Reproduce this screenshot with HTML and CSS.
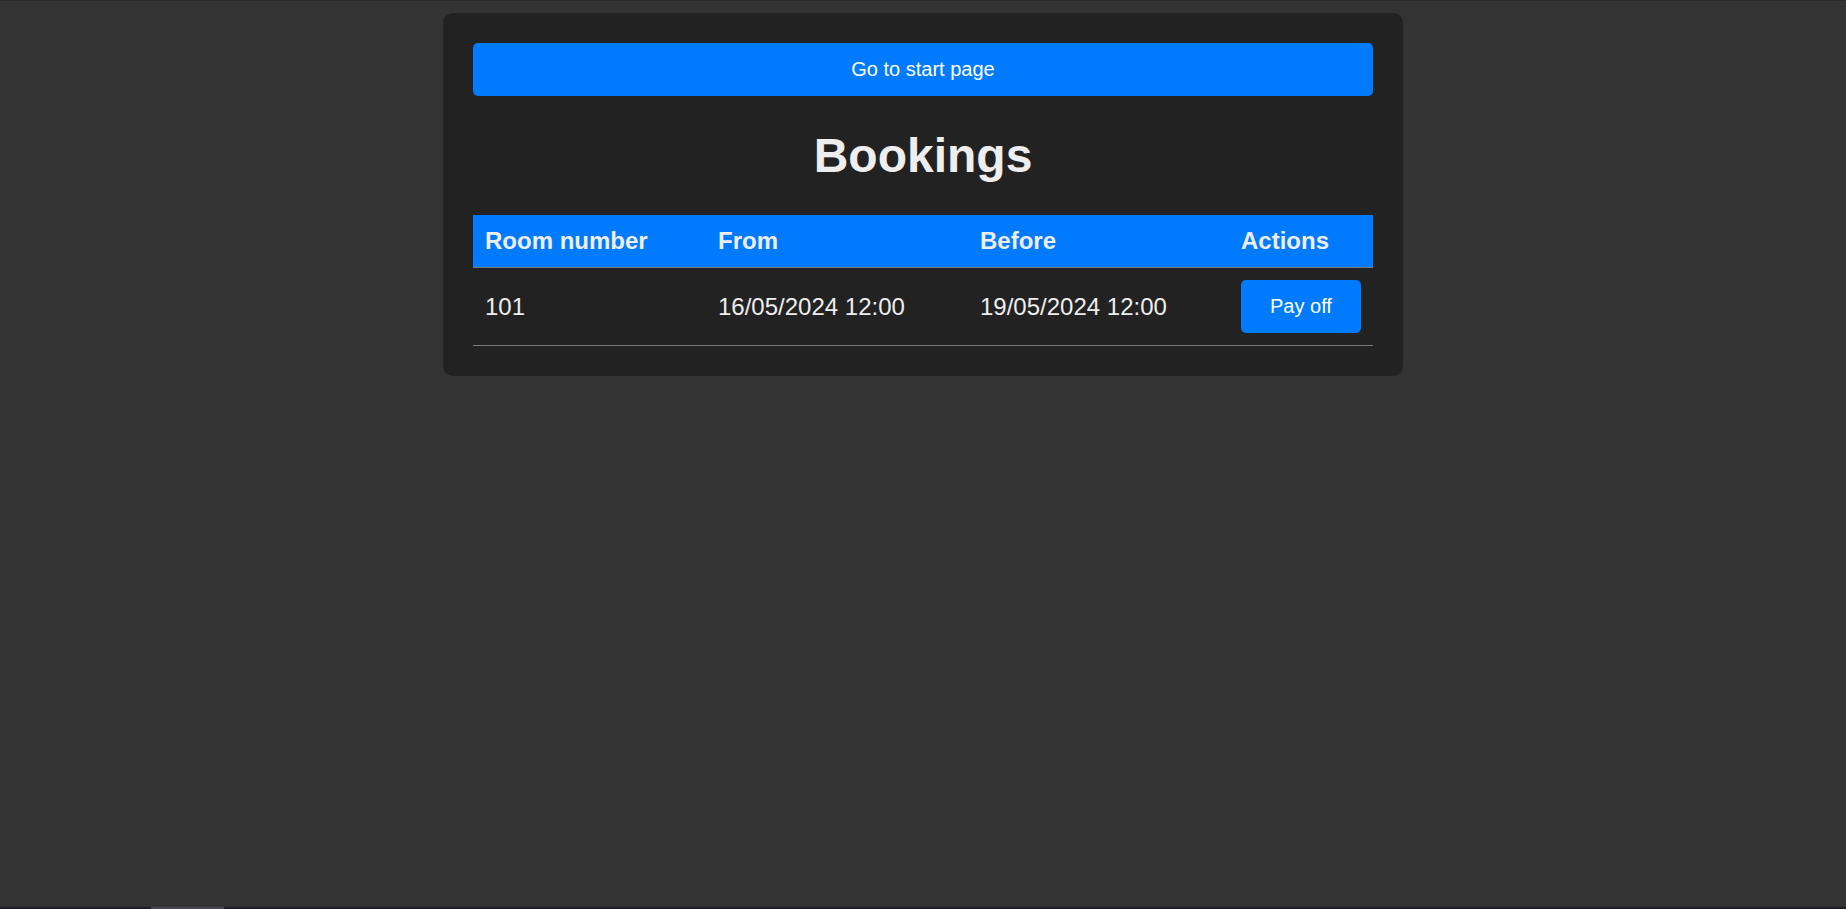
FILE: index.html
```html
<!DOCTYPE html>
<html lang="en">
<head>
<meta charset="utf-8">
<title>Bookings</title>
<link rel="stylesheet" href="styles.css">
</head>
<body>
<div class="topline"></div>
<main class="card">
  <button class="btn btn-wide" type="button">Go to start page</button>
  <h1 class="title">Bookings</h1>
  <table class="bookings">
    <thead>
      <tr>
        <th class="c-room">Room number</th>
        <th class="c-from">From</th>
        <th class="c-before">Before</th>
        <th class="c-actions">Actions</th>
      </tr>
    </thead>
    <tbody>
      <tr>
        <td>101</td>
        <td>16/05/2024 12:00</td>
        <td>19/05/2024 12:00</td>
        <td><button class="btn btn-small" type="button">Pay off</button></td>
      </tr>
    </tbody>
  </table>
</main>
<div class="bottombar"><div class="thumb"></div></div>
</body>
</html>
```
FILE: styles.css
```css
html, body {
  margin: 0;
  padding: 0;
}
body {
  background: #333333;
  font-family: "Liberation Sans", Arial, sans-serif;
  color: #eeeeee;
  min-height: 909px;
}
.topline {
  height: 1px;
  background: #2b2a30;
}
.card {
  width: 900px;
  margin: 12px auto 0;
  padding: 30px;
  background: #222222;
  border-radius: 10px;
}
.btn {
  background: #007bff;
  color: #ffffff;
  border: none;
  border-radius: 5px;
  font-family: "Liberation Sans", Arial, sans-serif;
  font-size: 20px;
  line-height: 23px;
  padding: 15px 29px;
  cursor: pointer;
  display: block;
}
.btn-wide {
  width: 100%;
}
.title {
  font-size: 48px;
  font-weight: bold;
  text-align: center;
  margin: 32px 0;
  color: #eeeeee;
}
.bookings {
  width: 100%;
  border-collapse: collapse;
  table-layout: fixed;
  font-size: 24px;
}
.bookings th,
.bookings td {
  padding: 12px;
  text-align: left;
  border-bottom: 1px solid #7a7a7a;
  vertical-align: middle;
}
.bookings th {
  background: #007bff;
  color: #eeeeee;
  font-weight: bold;
}
.c-room { width: 209px; }
.c-from { width: 238px; }
.c-before { width: 237px; }
.c-actions { width: 120px; }
.bottombar {
  position: fixed;
  left: 0;
  right: 0;
  bottom: 0;
  height: 2px;
  background: #1f1b27;
}
.bottombar .thumb {
  margin-left: 151px;
  width: 73px;
  height: 2px;
  background: #4a4652;
}
```
